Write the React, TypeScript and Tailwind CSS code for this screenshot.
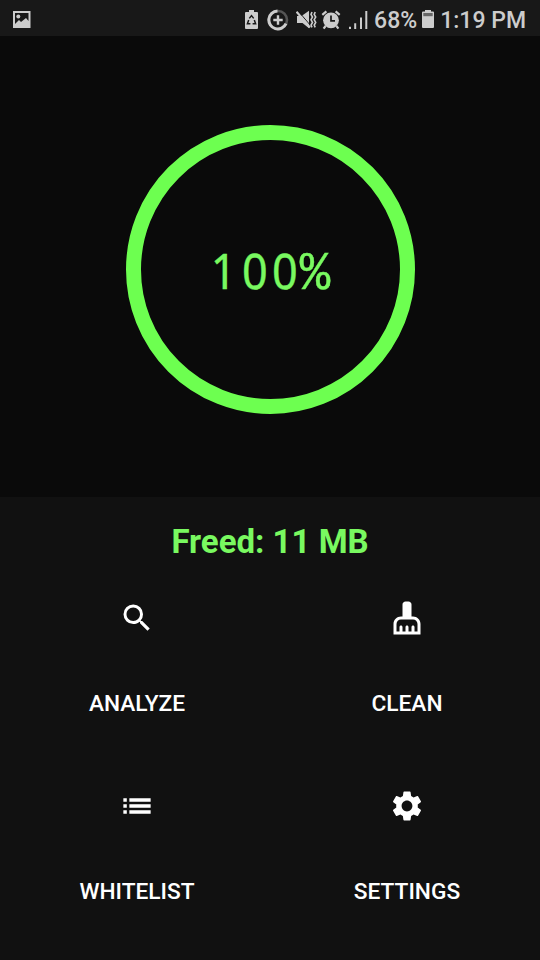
import { ReactNode } from "react";
import { MdSearch, MdSettings } from "react-icons/md";

const CleanIcon = () => (
  <svg viewBox="0 0 24 24" className="size-9" fill="currentColor">
    <path d="M16 11h-1V3c0-1.1-.9-2-2-2h-2c-1.1 0-2 .9-2 2v8H8c-2.76 0-5 2.24-5 5v7h18v-7c0-2.76-2.24-5-5-5zm3 10h-2v-3c0-.55-.45-1-1-1s-1 .45-1 1v3h-2v-3c0-.55-.45-1-1-1s-1 .45-1 1v3H9v-3c0-.55-.45-1-1-1s-1 .45-1 1v3H5v-5c0-1.65 1.35-3 3-3h8c1.65 0 3 1.35 3 3v5z" />
  </svg>
);

const ListIcon = () => (
  <svg viewBox="0 0 24 24" className="size-9" fill="currentColor">
    <path d="M2.9 6.8h2.3v2.3H2.900zM2.900 10.850h2.300v2.300H2.900zM2.900 14.900h2.300v2.300H2.900zM6.900 6.800h14.200v2.300H6.900zM6.900 10.850h14.200v2.300H6.900zM6.900 14.900h14.200v2.300H6.900z" />
  </svg>
);

const actions: { label: string; icon: ReactNode }[] = [
  { label: "ANALYZE", icon: <MdSearch className="size-9" /> },
  { label: "CLEAN", icon: <CleanIcon /> },
  { label: "WHITELIST", icon: <ListIcon /> },
  { label: "SETTINGS", icon: <MdSettings className="size-9" /> },
];

const PictureIcon = () => (
  <svg width="18" height="18" viewBox="0 0 18 18" fill="currentColor">
    <path
      fillRule="evenodd"
      d="M0 0h17.5v17H0zM2 2v11l4-4 2 2 5-4 2.5 3V2z"
    />
    <circle cx="5.3" cy="5.4" r="2" />
  </svg>
);

const BatterySaverIcon = () => (
  <svg width="13" height="19" viewBox="0 0 13 19">
    <path d="M4 0h5v2h3q1 0 1 1v15q0 1-1 1H1q-1 0-1-1V3q0-1 1-1h3z" fill="currentColor" />
    <g fill="none" stroke="#181818" strokeWidth="1.5">
      <path d="M4.3 8.4 6.5 5.6l2.2 2.8" />
      <path d="M3.7 10 2.4 13.7h3" />
      <path d="m9.3 10 1.3 3.7h-3" />
    </g>
  </svg>
);

const DataSaverIcon = () => (
  <svg width="22" height="22" viewBox="0 0 22 22" fill="none">
    <circle cx="11" cy="11" r="9" stroke="#555" strokeWidth="2.6" />
    <path d="M10.5 2a9 9 0 1 0 8.5 12.7" stroke="currentColor" strokeWidth="3" />
    <path d="M11 6.3v9.4M6.3 11h9.4" stroke="currentColor" strokeWidth="2.4" />
  </svg>
);

const VibrateIcon = () => (
  <svg width="21" height="20" viewBox="0 0 21 20">
    <path d="M1 6h4.5L13 .8v17.5L6.5 13H1z" fill="currentColor" />
    <path d="M2 .8 14.5 15.5" stroke="#181818" strokeWidth="1" />
    <path d="M.5 1.7 14 17.5" stroke="currentColor" strokeWidth="2.2" />
    <path
      d="m16 2-1 2.5 1.5 2.5-1.5 2.7 1.5 2.7-1.5 2.6 1 2.4M19.2 2l-1 2.5 1.5 2.5-1.5 2.7 1.5 2.7-1.5 2.6 1 2.4"
      fill="none"
      stroke="currentColor"
      strokeWidth="1.6"
    />
  </svg>
);

const AlarmIcon = () => (
  <svg width="20" height="20" viewBox="0 0 20 20" fill="none">
    <path d="M1.3 4.8 5.4 1.3M18.7 4.8l-4.1-3.5M4.6 16l-2 2.7M15.4 16l2 2.7" stroke="currentColor" strokeWidth="2.2" />
    <circle cx="10" cy="10.3" r="7.9" fill="currentColor" />
    <path d="M10 5.6v5.2h4" stroke="#181818" strokeWidth="1.7" />
  </svg>
);

const SignalIcon = () => (
  <svg width="19" height="18" viewBox="0 0 19 18" fill="currentColor">
    <path d="M0 15.8h2V18H0zM5.2 12.2h2V18h-2zM11 6.5h2V18h-2zM16.3 0h2v18h-2z" />
  </svg>
);

const BatteryIcon = () => (
  <svg width="12" height="18" viewBox="0 0 12 18">
    <path d="M3 0h6v1.5h2q1 0 1 1V17q0 1-1 1H1q-1 0-1-1V2.5q0-1 1-1h2z" fill="currentColor" />
    <path d="M1.3 3h9.4v3.2H1.3z" fill="#666" />
  </svg>
);

const StatusBar = () => (
  <header className="flex h-9 shrink-0 items-start bg-[#181818] text-[#cccccc]">
    <div className="pt-[11px] pl-[13px]">
      <PictureIcon />
    </div>
    <div className="ml-auto flex h-[39px] items-center pr-[14px] text-[23px] leading-7 font-medium">
      <BatterySaverIcon />
      <div className="ml-[9px]">
        <DataSaverIcon />
      </div>
      <div className="ml-[7px]">
        <VibrateIcon />
      </div>
      <div className="ml-1">
        <AlarmIcon />
      </div>
      <div className="ml-2">
        <SignalIcon />
      </div>
      <span className="ml-[6px] pt-[3px]">68%</span>
      <div className="ml-[5px] pb-px">
        <BatteryIcon />
      </div>
      <span className="ml-[6px] pt-[3px]">1:19 PM</span>
    </div>
  </header>
);

const App = () => {
  return (
    <div className="flex h-[960px] w-[540px] flex-col overflow-hidden bg-[#111111] font-['Roboto',sans-serif]">
      <StatusBar />

      {/* Progress ring */}
      <section className="flex h-[461px] shrink-0 justify-center bg-[#0a0a0a] pt-[88.5px]">
        <div className="flex size-[289px] items-center justify-center rounded-full border-[15px] border-[#6dff50]">
          <div className="flex h-[50px] translate-y-px font-['Noto_Sans',sans-serif] text-[50px] leading-[50px] text-[#79f960] [-webkit-text-stroke:0.4px_#79f960]">
            <span className="flex w-[30px] scale-x-[0.9] justify-center pr-[3px]">1</span>
            <span className="flex w-[30px] scale-x-[0.9] justify-center">0</span>
            <span className="flex w-[30px] scale-x-[0.9] justify-center">0</span>
            <span className="flex w-[30px] scale-x-[0.94] justify-center pt-[5px] font-['Liberation_Mono',monospace] text-[54px]">
              %
            </span>
          </div>
        </div>
      </section>

      {/* Result and actions */}
      <h1 className="mt-[25px] text-center text-[33px] leading-10 font-bold text-[#79f960]">
        Freed: 11 MB
      </h1>
      <div className="grid grid-cols-[270px_270px] gap-y-[69.5px] pt-[38px] pl-[2px] text-white">
        {actions.map((action) => (
          <button
            key={action.label}
            className="flex flex-col items-center text-[22.7px] leading-7 font-medium"
          >
            {action.icon}
            <span className="mt-[54px]">{action.label}</span>
          </button>
        ))}
      </div>
    </div>
  );
};

export default App;
